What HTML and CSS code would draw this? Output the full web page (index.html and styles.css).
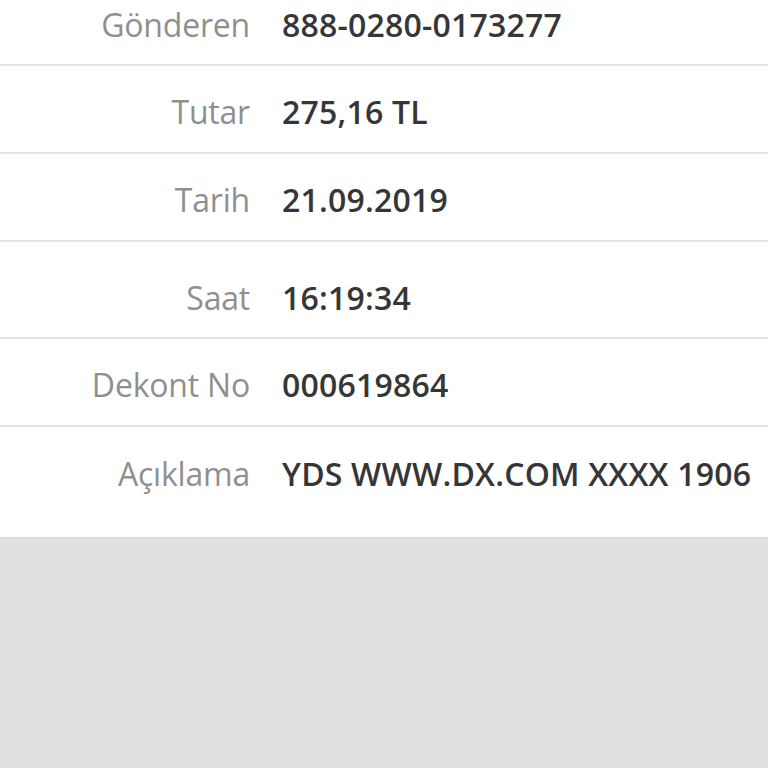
FILE: index.html
```html
<!DOCTYPE html>
<html lang="tr">
<head>
    <meta charset="UTF-8">
    <meta name="viewport" content="width=device-width, initial-scale=1.0">
    <title>Dekont</title>
    <link rel="stylesheet" href="styles.css">
</head>
<body>
    <div class="details">
        <div class="row first">
            <span class="label">Gönderen</span>
            <span class="value">888-0280-0173277</span>
        </div>
        <div class="row">
            <span class="label">Tutar</span>
            <span class="value">275,16 TL</span>
        </div>
        <div class="row">
            <span class="label">Tarih</span>
            <span class="value">21.09.2019</span>
        </div>
        <div class="row tall">
            <span class="label">Saat</span>
            <span class="value">16:19:34</span>
        </div>
        <div class="row">
            <span class="label">Dekont No</span>
            <span class="value">000619864</span>
        </div>
        <div class="row last">
            <span class="label">Açıklama</span>
            <span class="value">YDS WWW.DX.COM XXXX 1906</span>
        </div>
    </div>
    <div class="footer"></div>
</body>
</html>
```

FILE: styles.css
```css
html, body { margin: 0; padding: 0; }
body { font-family: "Open Sans", "Noto Sans", Arial, sans-serif; background: #e0e0e0; height: 768px; overflow: hidden; }
.details { background: #fff; }
.row { display: grid; grid-template-columns: 250px 1fr; column-gap: 32px; align-items: center; height: 88px; border-bottom: 2px solid #e4e4e4; box-sizing: border-box; padding-top: 4px; }
.row.first { height: 66px; padding-top: 0; padding-bottom: 16px; }
.row.tall { height: 97px; padding-top: 16px; }
.row.last { height: 111px; border-bottom: 1px solid #d6d6d6; padding-top: 0; padding-bottom: 18px; }
.label { text-align: right; color: #8f8f8f; font-size: 32px; letter-spacing: -0.2px; }
.value { color: #363636; font-size: 32px; font-weight: 600; letter-spacing: 0.2px; white-space: nowrap; }
```
